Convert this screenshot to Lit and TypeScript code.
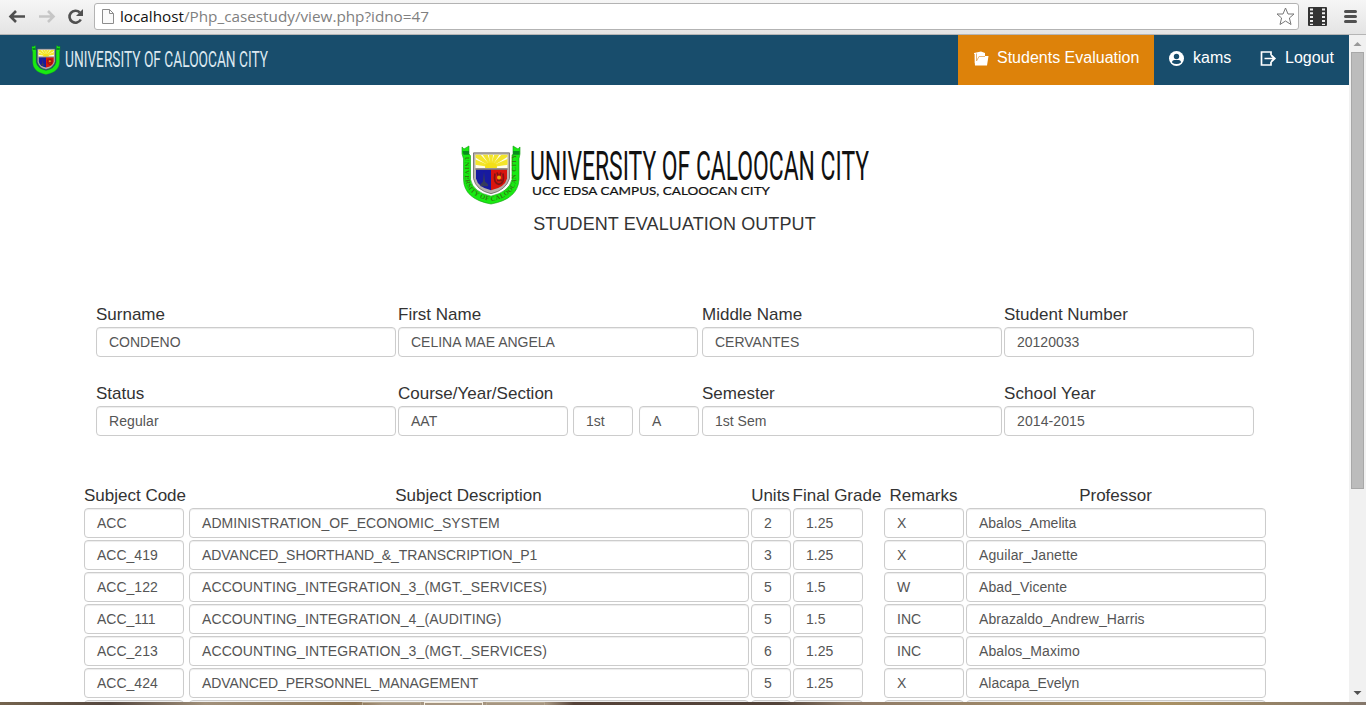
import { LitElement, html, css, svg } from "lit";
import { customElement, property } from "lit/decorators.js";

@customElement("ucc-seal")
class UccSeal extends LitElement {
  @property({ type: Boolean }) lettered = false;
  static styles = css`
    :host { display: block; }
    svg { display: block; width: 100%; height: 100%; overflow: visible; }
  `;
  render() {
    const rays = [-74, -50, -25, 0, 25, 50, 74].map(
      (a) => svg`<path d="M29 26 L24.500 -8 L33.500 -8 Z" fill="#f3e52a" transform=${`rotate(${a} 29 22)`} />`
    );
    return html`<svg viewBox="0 0 58 61" preserveAspectRatio="none">
      <defs>
        <clipPath id="sky"><path d="M13.500 10 H45.500 V23.500 H13.500Z" /></clipPath>
        <path id="arc" d="M3.200 12 V35 Q5 52 29 57.500 Q53 52 54.500 35 V8" />
      </defs>
      <path d="M0 2 L2 4 L7 1 V9 L8.500 11 V35 Q11 48 29 52 Q47 48 50 35 V11 L51 9 V1 L56 4 L58 2 V9 L57 14 V35 Q56 55 29 60 Q2 55 1.500 35 V14 L0 9Z" fill="#19ea12" stroke="#119b0f" stroke-width="0.6" />
      <path d="M0.500 6 H7 V10 H1.500Z M51 6 H57.500 V10 H51Z" fill="#098d1c" />
      ${this.lettered ? svg`<text font-family="Liberation Serif" font-size="6.600" letter-spacing="0.450" font-weight="bold" fill="#337a12"><textPath href="#arc">UNIVERSITY OF CALOOCAN CITY</textPath></text>` : ""}
      <path d="M11.500 8 H47.500 V34 Q44 46 29 49.500 Q14 46 11.500 34Z" fill="#b7b1ad" stroke="#75706d" stroke-width="0.900" />
      <path d="M13.500 10 H45.500 V23.500 H13.500Z" fill="#fffde8" />
      <g clip-path="url(#sky)">${rays}<ellipse cx="29" cy="22" rx="6" ry="4" fill="#f3df18" /></g>
      <path d="M14 25 H29 V46 Q16 43 14 34Z" fill="#171aa0" />
      <path d="M29 25 H45 V34 Q43 43 29 46Z" fill="#d9140d" />
      <path d="M13.500 24.500 H45.500" stroke="#77716d" stroke-width="1.400" />
      <path d="M22 27 L23 37 L26 40 V42 H18.500 V40 L21 37Z" fill="#353b5d" />
      <path d="M33 29 Q31 39 37 40 Q43 39 41 29 M35 28 L37 33 L39 28 M35 36 H40" fill="none" stroke="#811313" stroke-width="1.700" />
      <circle cx="37" cy="33" r="2" fill="#e9a80d" />
    </svg>`;
  }
}

@customElement("form-field")
class FormField extends LitElement {
  @property() value = "";
  static styles = css`
    :host { display: block; height: 30px; min-width: 0; }
    .box {
      box-sizing: border-box; height: 30px; padding: 0 12px;
      border: 1px solid #ccc; border-radius: 4px; background: #fff; color: #555;
      box-shadow: inset 0 1px 1px rgba(0, 0, 0, 0.075);
      font: 14px/28px "Liberation Sans", Arial, sans-serif; white-space: nowrap; overflow: hidden;
    }
  `;
  render() {
    return html`<div class="box">${this.value}</div>`;
  }
}

const ROWS = [
  ["ACC", "ADMINISTRATION_OF_ECONOMIC_SYSTEM", "2", "1.25", "X", "Abalos_Amelita"],
  ["ACC_419", "ADVANCED_SHORTHAND_&_TRANSCRIPTION_P1", "3", "1.25", "X", "Aguilar_Janette"],
  ["ACC_122", "ACCOUNTING_INTEGRATION_3_(MGT._SERVICES)", "5", "1.5", "W", "Abad_Vicente"],
  ["ACC_111", "ACCOUNTING_INTEGRATION_4_(AUDITING)", "5", "1.5", "INC", "Abrazaldo_Andrew_Harris"],
  ["ACC_213", "ACCOUNTING_INTEGRATION_3_(MGT._SERVICES)", "6", "1.25", "INC", "Abalos_Maximo"],
  ["ACC_424", "ADVANCED_PERSONNEL_MANAGEMENT", "5", "1.25", "X", "Alacapa_Evelyn"],
  ["", "", "", "", "", ""],
];
const HEADS = ["Subject Code", "Subject Description", "Units", "Final Grade", "Remarks", "Professor"];
const TRACKING: Record<string, string> = {
  "ACCOUNTING_INTEGRATION_3_(MGT._SERVICES)": "wide",
  "ACCOUNTING_INTEGRATION_4_(AUDITING)": "wide",
  "ADVANCED_PERSONNEL_MANAGEMENT": "tight",
  "ADVANCED_SHORTHAND_&_TRANSCRIPTION_P1": "snug",
  "ADMINISTRATION_OF_ECONOMIC_SYSTEM": "open",
  "Abrazaldo_Andrew_Harris": "wide",
  "Abalos_Maximo": "wide",
  "Abad_Vicente": "wide",
  "Aguilar_Janette": "wide",
};

@customElement("app-root")
class AppRoot extends LitElement {
  static styles = css`
    :host { display: block; width: 1366px; height: 705px; overflow: hidden; background: #fff; font-family: "Liberation Sans", Arial, sans-serif; color: #333; }
    svg { display: block; flex: none; }
    .window { display: flex; flex-direction: column; height: 705px; }
    .toolbar { box-sizing: border-box; height: 35px; flex: none; display: flex; align-items: flex-start; background: linear-gradient(#f6f6f6, #e4e4e4); border-bottom: 1px solid #b5b5b5; }
    .buttons { width: 94px; }
    .omnibox { box-sizing: border-box; width: 1205px; height: 27px; margin-top: 3px; border: 1px solid #b3b3b3; border-radius: 3px; background: #fff; display: flex; align-items: center; padding: 0 3px 0 5px; }
    .url { flex: 1; }
    .view { flex: 1; min-height: 0; display: flex; }
    .page { width: 1349px; overflow: hidden; display: flex; flex-direction: column; }
    .scroll { width: 17px; background: #f1f1f1; display: flex; flex-direction: column; align-items: center; justify-content: space-between; }
    .top { display: flex; flex-direction: column; align-items: center; }
    .thumb { box-sizing: border-box; width: 13px; height: 437px; background: #bcbcbc; border: 1px solid #a8a8a8; }
    nav { height: 50px; flex: none; background: #184d6c; display: flex; color: #fff; font-size: 16px; }
    .brand { flex: 1; display: flex; padding-left: 32px; }
    .brand ucc-seal { width: 28px; height: 30px; margin-top: 10px; }
    .link { box-sizing: border-box; height: 50px; display: flex; line-height: 20px; padding-top: 13px; white-space: nowrap; gap: 8px; padding-left: 15px; }
    .link svg { margin-top: 2px; }
    .active { width: 196px; background: #dd820a; }
    .user { width: 91px; }
    .logout { width: 104px; }
    .banner { display: flex; padding: 60px 0 0 462px; height: 61px; flex: none; }
    .banner ucc-seal { width: 58px; height: 60px; }
    h1 { margin: 8px 0 0; font-weight: 400; font-size: 18px; line-height: 20px; letter-spacing: 0.1px; text-align: center; flex: none; }
    .info { display: grid; grid-template-columns: 300px 302px 300px 250px; column-gap: 2px; row-gap: 25px; margin: 69px 0 0 96px; flex: none; }
    label { display: block; font-size: 17px; line-height: 24px; height: 24px; white-space: nowrap; }
    .name { width: 300px; }
    .split { display: grid; grid-template-columns: 170px 60px 60px; column-gap: 5px; }
    .section { margin-left: 1px; width: 60px; }
    .subjects { display: grid; grid-template-columns: 103px 560px 40px 89px 80px 300px; column-gap: 2px; row-gap: 2px; margin: 48px 0 0 84px; flex: none; }
    .head { height: 22px; line-height: 24px; font-size: 17px; text-align: center; white-space: nowrap; margin-left: -1px; }
    .code { width: 100px; }
    .grade { width: 70px; }
    .wide { letter-spacing: 0.1px; }
    .open { letter-spacing: 0.05px; }
    .tight { letter-spacing: -0.1px; }
    .snug { letter-spacing: -0.05px; }
    .taskbar { height: 3px; flex: none; background: linear-gradient(90deg, #75644e, #55473f 8%, #a1907a 15%, #8d7554 26%, #a69580 28%, #a69580 40%, #564339 42%, #53443a 57%, #8f7b68 62%, #9d8768 73%, #aa9163 85%, #84776b); display: flex; padding-left: 362px; gap: 3px; }
    .task { box-sizing: border-box; width: 59px; height: 3px; border: 1px solid #b6a891; border-bottom: 0; }
    .current { border-color: #f4eddf; }
  `;

  render() {
    return html`<div class="window">
      <div class="toolbar">
        <svg class="buttons" width="94" height="34">
          <path d="M25 16.500H11M16 11L10.500 16.500L16 22" fill="none" stroke="#505050" stroke-width="2.600" />
          <path d="M39 16.500H53M48 11L53.500 16.500L48 22" fill="none" stroke="#c6c6c6" stroke-width="2.600" />
          <path d="M80.800 19.500A6 6 0 1 1 79.800 12.500" fill="none" stroke="#505050" stroke-width="2.600" />
          <path d="M83 9V16H76Z" fill="#505050" />
        </svg>
        <div class="omnibox">
          <svg width="18" height="25"><path d="M2.500 5.500H9.500L13.500 9.500V19.500H2.500Z M9.500 5.500V9.500H13.500" fill="#fafafa" stroke="#8c8c8c" /></svg>
          <svg class="url" height="25"><text x="2" y="18" font-family="Open Sans" font-size="15" textLength="309" lengthAdjust="spacingAndGlyphs" fill="#808080"><tspan fill="#111">localhost</tspan>/Php_casestudy/view.php?idno=47</text></svg>
          <svg width="19" height="25"><path d="M9.500 4L12 10H18L13.400 14L15 20.500L9.500 17L4 20.500L5.600 14L1 10H7Z" fill="#fff" stroke="#777" stroke-linejoin="round" /></svg>
        </div>
        <svg width="67" height="34">
          <rect x="9" y="7" width="19" height="19" rx="1" fill="#333" />
          <path d="M12.500 8.500V25M24.500 8.500V25" stroke="#eee" stroke-width="3" stroke-dasharray="2 1.800" />
          <path d="M46.500 11.500H56.500M46.500 16.500H56.500M46.500 21.500H56.500" stroke="#505050" stroke-width="3" stroke-linecap="round" />
        </svg>
      </div>
      <div class="view">
        <div class="page">
          <nav>
            <div class="brand"><ucc-seal></ucc-seal>
              <svg width="220" height="50"><text x="5" y="32" font-family="Roboto" font-size="21.500" textLength="203" lengthAdjust="spacingAndGlyphs" fill="#dce8f0">UNIVERSITY OF CALOOCAN CITY</text></svg>
            </div>
            <div class="link active">
              <svg width="16" height="17"><path d="M1 3L8 1.500L12 3V6H15.500L14 15.500H2Z" fill="#fff" /><path d="M1.500 4V13M3.500 3.500V11L6 6.500H12" fill="none" stroke="#e7ad65" stroke-width="0.900" /></svg>
              <span>Students Evaluation</span>
            </div>
            <div class="link user">
              <svg width="16" height="17"><circle cx="7.500" cy="8.500" r="7.500" fill="#fff" /><circle cx="7.500" cy="6.500" r="2.700" fill="#184d6c" /><path d="M3 12.500Q3 10 5.500 10H9.500Q12 10 12 12.500Q10 14 7.500 14Q5 14 3 12.500Z" fill="#184d6c" /></svg>
              <span>kams</span>
            </div>
            <div class="link logout">
              <svg width="17" height="17"><path d="M11 5V2H1.500V15H11V12M4.500 8.500H14M11 5L14.800 8.500L11 12" fill="none" stroke="#fff" stroke-width="1.700" /></svg>
              <span>Logout</span>
            </div>
          </nav>
          <div class="banner"><ucc-seal lettered></ucc-seal>
            <svg width="420" height="60">
              <text x="10" y="35" font-family="Roboto" font-size="41" textLength="339" lengthAdjust="spacingAndGlyphs" fill="#111">UNIVERSITY OF CALOOCAN CITY</text>
              <text x="12" y="50" font-family="Lato" font-size="12" textLength="238" lengthAdjust="spacingAndGlyphs" fill="#111" stroke="#111" stroke-width="0.200">UCC EDSA CAMPUS, CALOOCAN CITY</text>
            </svg>
          </div>
          <h1>STUDENT EVALUATION OUTPUT</h1>
          <div class="info">
            <div><label>Surname</label><form-field value="CONDENO"></form-field></div>
            <div><label>First Name</label><form-field class="name" value="CELINA MAE ANGELA"></form-field></div>
            <div><label>Middle Name</label><form-field value="CERVANTES"></form-field></div>
            <div><label>Student Number</label><form-field value="20120033"></form-field></div>
            <div><label>Status</label><form-field class="wide" value="Regular"></form-field></div>
            <div><label>Course/Year/Section</label><div class="split"><form-field value="AAT"></form-field><form-field value="1st"></form-field><form-field class="section" value="A"></form-field></div></div>
            <div><label>Semester</label><form-field value="1st Sem"></form-field></div>
            <div><label class="wide">School Year</label><form-field class="wide" value="2014-2015"></form-field></div>
          </div>
          <div class="subjects">
            ${HEADS.map((h) => html`<div class="head">${h}</div>`)}
            ${ROWS.map((r) => r.map((v, i) => html`<form-field class="${i === 0 ? "code" : i === 3 ? "grade" : "cell"} ${TRACKING[v] ?? ""}" .value=${v}></form-field>`))}
          </div>
        </div>
        <div class="scroll">
          <div class="top"><svg width="17" height="17"><path d="M4.500 11L8.500 7L12.500 11Z" fill="#999" /></svg><div class="thumb"></div></div>
          <svg width="17" height="17"><path d="M4.500 6L8.500 10L12.500 6Z" fill="#505050" /></svg>
        </div>
      </div>
      <div class="taskbar"><div class="task"></div><div class="task current"></div><div class="task"></div></div>
    </div>`;
  }
}
